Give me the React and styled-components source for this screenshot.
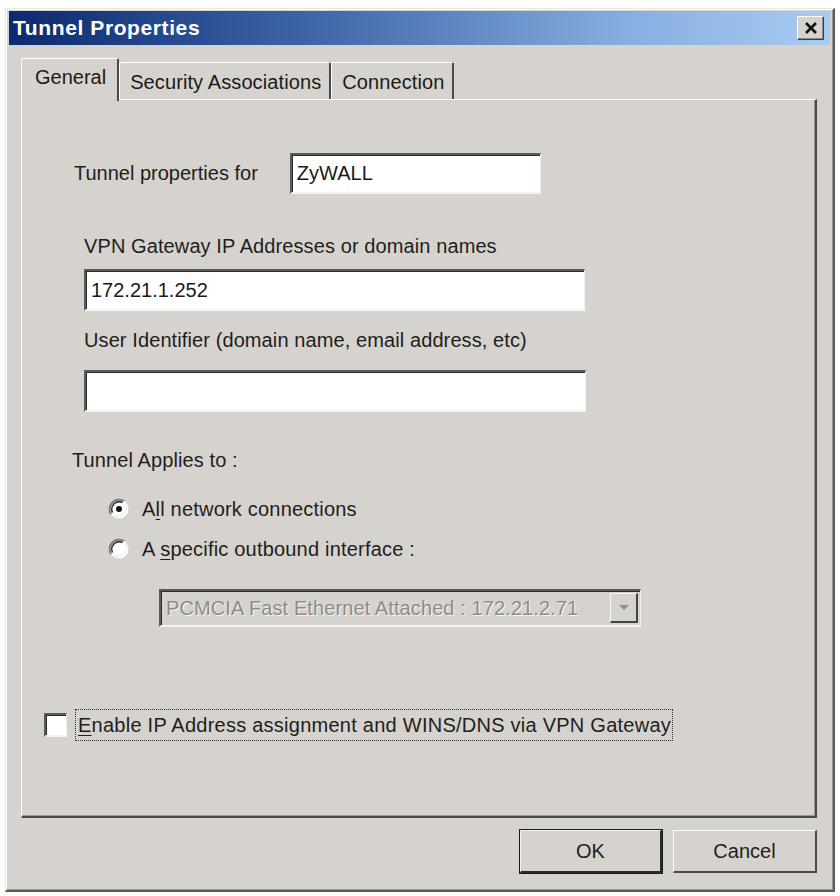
import React from 'react';
import styled, { createGlobalStyle, css } from 'styled-components';

const GlobalStyle = createGlobalStyle`
  body {
    margin: 0;
    background: #fff;
    font-family: "Liberation Sans", Tahoma, Arial, sans-serif;
  }
`;

const face = '#d6d3ce';

const Window = styled.div`
  margin: 8px 0 0 5px;
  width: 830px;
  height: 884px;
  box-sizing: border-box;
  background: ${face};
  border-top: 1px solid #e8e6e2;
  border-left: 1px solid #e8e6e2;
  border-right: 2px solid #5a5a5a;
  border-bottom: 2px solid #5a5a5a;
  box-shadow: inset 1px 1px 0 #fff, inset -1px -1px 0 #9a9894;
  padding: 2px 3px;
  display: flex;
  flex-direction: column;
`;

const TitleBar = styled.div`
  height: 34px;
  display: flex;
  align-items: center;
  justify-content: space-between;
  padding: 0 6px 0 4px;
  background: linear-gradient(90deg, #0c2a6e 0%, #3c62a6 35%, #86aee0 75%, #a8cbf2 100%);
`;

const Title = styled.span`
  color: #fff;
  font-weight: bold;
  font-size: 21px;
  letter-spacing: 0.6px;
`;

const CloseButton = styled.div`
  width: 27px;
  height: 24px;
  box-sizing: border-box;
  background: ${face};
  border-top: 1px solid #fff;
  border-left: 1px solid #fff;
  border-right: 1px solid #404040;
  border-bottom: 1px solid #404040;
  box-shadow: inset -1px -1px 0 #8a8884;
  display: flex;
  align-items: center;
  justify-content: center;
`;

const Body = styled.div`
  flex: 1;
  display: flex;
  flex-direction: column;
  padding: 12px 13px 0 12px;
`;

const TabStrip = styled.div`
  display: flex;
  align-items: flex-end;
  height: 42px;
  padding-left: 2px;
  position: relative;
  z-index: 1;
`;

const Tab = styled.div`
  box-sizing: border-box;
  font-size: 20px;
  color: #1a1a1a;
  display: flex;
  align-items: center;
  background: ${face};
  border-top: 1px solid #fff;
  border-left: 1px solid #fff;
  border-right: 2px solid #4a4a4a;
  border-radius: 2px 2px 0 0;
  ${p => p.$active ? css`
    height: 43px;
    margin-bottom: -2px;
    padding: 0 11px 6px 13px;
    margin-left: -2px;
  ` : css`
    height: 37px;
    padding: 2px 8px 0 10px;
    letter-spacing: 0.1px;
  `}
`;

const Panel = styled.div`
  height: 719px;
  box-sizing: border-box;
  border-top: 1px solid #fff;
  border-left: 1px solid #fff;
  border-right: 2px solid #4a4a4a;
  border-bottom: 2px solid #4a4a4a;
  box-shadow: inset -1px -1px 0 #9a9894;
  display: flex;
  flex-direction: column;
  padding: 0 0 0 21px;
  font-size: 20px;
  color: #1e1e1e;
`;

const FirstRow = styled.div`
  display: flex;
  align-items: center;
  margin-top: 53px;
  padding-left: 31px;
`;

const Label = styled.div`
  padding-left: ${p => p.$indent || 0}px;
  margin-top: ${p => p.$top || 0}px;
  line-height: 24px;
  letter-spacing: 0.1px;
`;

const sunken = css`
  box-sizing: border-box;
  border-top: 2px solid #5a5a5a;
  border-left: 2px solid #5a5a5a;
  border-right: 1px solid #f4f3f1;
  border-bottom: 2px solid #f4f3f1;
  box-shadow: inset 1px 1px 0 #2c2c2c;
`;

const TextBox = styled.div`
  ${sunken};
  width: ${p => p.$w}px;
  height: ${p => p.$h || 42}px;
  margin-left: ${p => p.$left || 0}px;
  margin-top: ${p => p.$top || 0}px;
  background: #fff;
  display: flex;
  align-items: center;
  padding-left: 5px;
  font-size: 20px;
  color: #1a1a1a;
`;

const RadioRow = styled.label`
  display: flex;
  align-items: center;
  gap: 12px;
  padding-left: 65px;
  margin-top: ${p => p.$top}px;
  line-height: 24px;
  letter-spacing: 0.2px;
`;

const Key = styled.span`
  text-decoration: underline;
  text-underline-offset: 3px;
  text-decoration-thickness: 1px;
`;

const Combo = styled.div`
  ${sunken};
  width: 482px;
  height: 38px;
  margin: 28px 0 0 116px;
  background: ${face};
  display: flex;
  align-items: center;
  justify-content: space-between;
  padding: 0 2px 0 5px;
  color: #8e8c88;
  font-size: 20px;
  letter-spacing: 0.1px;
  text-shadow: 1px 1px 0 #f6f5f3;
`;

const ComboArrow = styled.div`
  width: 28px;
  height: 30px;
  box-sizing: border-box;
  background: ${face};
  border-top: 1px solid #f6f5f3;
  border-left: 1px solid #f6f5f3;
  border-right: 2px solid #444;
  border-bottom: 2px solid #444;
  display: flex;
  align-items: center;
  justify-content: center;
`;

const CheckRow = styled.div`
  display: flex;
  align-items: center;
  gap: 10px;
  margin-top: 84px;
  padding-left: 1px;
`;

const CheckBox = styled.div`
  ${sunken};
  width: 23px;
  height: 24px;
  background: #fff;
`;

const FocusText = styled.span`
  white-space: nowrap;
  outline: 1px dotted #333;
  outline-offset: 1px;
  padding: 2px 0 2px 1px;
  line-height: 24px;
  letter-spacing: 0.25px;
`;

const ButtonBar = styled.div`
  display: flex;
  justify-content: flex-end;
  gap: 11px;
  margin-top: 12px;
`;

const Button = styled.div`
  width: ${p => p.$w}px;
  height: 43px;
  box-sizing: border-box;
  display: flex;
  align-items: center;
  justify-content: center;
  font-size: 20px;
  color: #1e1e1e;
  background: ${face};
  border-top: 1px solid #fbfbfa;
  border-left: 1px solid #fbfbfa;
  border-right: 2px solid #4a4a4a;
  border-bottom: 2px solid #4a4a4a;
  ${p => p.$default && css`
    outline: 1px solid #1a1a1a;
    border-top-color: #f2f1ef;
    border-left-color: #f2f1ef;
    border-right-color: #2a2a2a;
    border-bottom-color: #2a2a2a;
  `}
`;

const Radio = ({ checked }) => (
  <svg width="22" height="22" viewBox="0 0 22 22">
    <circle cx="11" cy="11" r="9.5" fill="#fff" />
    <path d="M3 16 A9.5 9.5 0 0 1 16 3" stroke="#7a7874" strokeWidth="2" fill="none" />
    <path d="M4.5 14.5 A7.5 7.5 0 0 1 14.5 4.5" stroke="#2e2e2e" strokeWidth="1.5" fill="none" />
    <path d="M18 6 A9.5 9.5 0 0 1 6 18" stroke="#f2f1ef" strokeWidth="2" fill="none" />
    {checked && <circle cx="11" cy="11" r="3" fill="#111" />}
  </svg>
);

export default function App() {
  return (
    <>
      <GlobalStyle />
      <Window>
        <TitleBar>
          <Title>Tunnel Properties</Title>
          <CloseButton>
            <svg width="14" height="12" viewBox="0 0 14 12">
              <path d="M2 1 L12 11 M12 1 L2 11" stroke="#111" strokeWidth="2.6" />
            </svg>
          </CloseButton>
        </TitleBar>
        <Body>
          <TabStrip>
            <Tab $active>General</Tab>
            <Tab>Security Associations</Tab>
            <Tab>Connection</Tab>
          </TabStrip>
          <Panel>
            <FirstRow>
              <span>Tunnel properties for</span>
              <TextBox $w={251} $h={41} $left={32}>ZyWALL</TextBox>
            </FirstRow>
            <Label $indent={41} $top={40}>VPN Gateway IP Addresses or domain names</Label>
            <TextBox $w={501} $left={41} $top={11}>172.21.1.252</TextBox>
            <Label $indent={41} $top={17}>User Identifier (domain name, email address, etc)</Label>
            <TextBox $w={502} $left={41} $top={18}></TextBox>
            <Label $indent={29} $top={36}>Tunnel Applies to :</Label>
            <RadioRow $top={25}>
              <Radio checked />
              <span>A<Key>l</Key>l network connections</span>
            </RadioRow>
            <RadioRow $top={16}>
              <Radio />
              <span>A <Key>s</Key>pecific outbound interface :</span>
            </RadioRow>
            <Combo>
              <span>PCMCIA Fast Ethernet Attached : 172.21.2.71</span>
              <ComboArrow>
                <svg width="12" height="7" viewBox="0 0 12 7">
                  <path d="M1 1 H11 L6 6 Z" fill="#8e8c88" />
                </svg>
              </ComboArrow>
            </Combo>
            <CheckRow>
              <CheckBox />
              <FocusText><Key>E</Key>nable IP Address assignment and WINS/DNS via VPN Gateway</FocusText>
            </CheckRow>
          </Panel>
          <ButtonBar>
            <Button $w={142} $default>OK</Button>
            <Button $w={144}>Cancel</Button>
          </ButtonBar>
        </Body>
      </Window>
    </>
  );
}
